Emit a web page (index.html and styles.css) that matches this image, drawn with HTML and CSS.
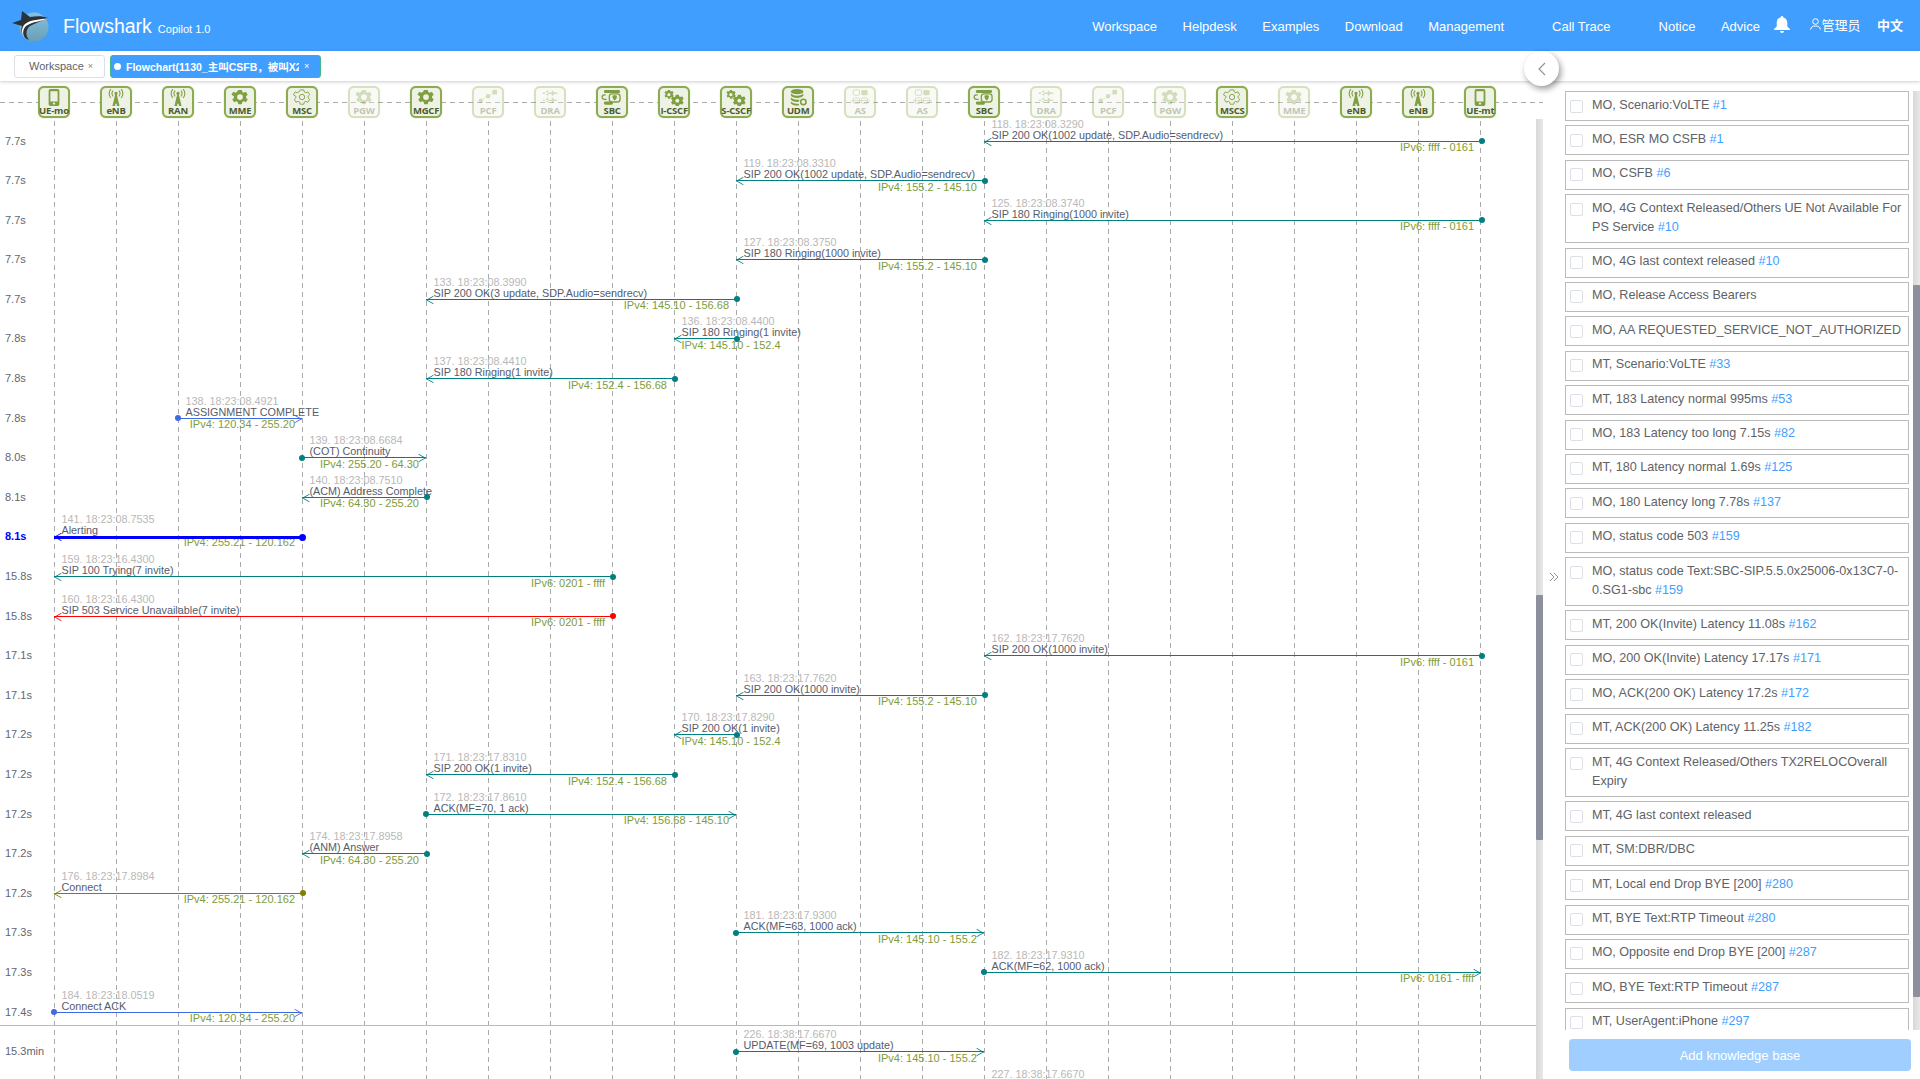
FILE: index.html
```html
<!DOCTYPE html>
<html lang="en">
<head>
<meta charset="utf-8">
<title>Flowshark</title>
<link rel="stylesheet" href="styles.css">
</head>
<body>
<svg class="defs" width="0" height="0" aria-hidden="true">
  <defs>
    <linearGradient id="globe" x1="0" y1="0" x2="0" y2="1"><stop offset="0" stop-color="#86bfe0"/><stop offset="1" stop-color="#6a9fb5"/></linearGradient>
    <symbol id="i-phone" viewBox="0 0 28 19"><path fill-rule="evenodd" d="M10 0h8a2 2 0 0 1 2 2v15a2 2 0 0 1-2 2h-8a2 2 0 0 1-2-2V2a2 2 0 0 1 2-2zm0 2.5V14h8V2.500zM14 15a1.300 1.300 0 1 0 0 2.600A1.300 1.300 0 0 0 14 15z"/></symbol>
    <symbol id="i-ant" viewBox="0 0 28 19"><circle cx="14" cy="5" r="1.800"/><path d="M13.200 6h1.600L18 19h-3l-.3-2.500h-1.400L13 19h-3z"/><path fill="none" stroke="currentColor" stroke-width="1.200" d="M10.800 1.800a5 5 0 0 0 0 6.400M17.200 1.800a5 5 0 0 1 0 6.400M8.300 0a8 8 0 0 0 0 10M19.700 0a8 8 0 0 1 0 10"/></symbol>
    <symbol id="i-gear" viewBox="0 0 28 19"><path fill-rule="evenodd" d="M12 1h4l.6 2.400 1.700.8 2.300-1 2 3.200-1.800 1.700v1.800l1.800 1.700-2 3.200-2.300-1-1.700.8L16 17h-4l-.6-2.400-1.700-.8-2.300 1-2-3.200 1.800-1.700V8.100L4.400 6.400l2-3.200 2.300 1 1.700-.8zM14 5.800a3.200 3.200 0 1 0 0 6.400 3.200 3.200 0 0 0 0-6.400z"/></symbol>
    <symbol id="i-gearo" viewBox="0 0 28 19"><path fill="none" stroke="currentColor" stroke-width="1" d="M12 1h4l.6 2.400 1.700.8 2.300-1 2 3.200-1.800 1.700v1.800l1.800 1.700-2 3.200-2.300-1-1.700.8L16 17h-4l-.6-2.400-1.700-.8-2.300 1-2-3.200 1.800-1.700V8.100L4.400 6.400l2-3.200 2.300 1 1.700-.8z"/><circle cx="14" cy="9" r="3" fill="none" stroke="currentColor"/></symbol>
    <symbol id="i-net" viewBox="0 0 28 19"><rect x="19" y="1" width="5" height="5"/><circle cx="14" cy="8" r="2.500"/><circle cx="6" cy="13" r="2.500"/><path fill="none" stroke="currentColor" stroke-dasharray="2 1.500" d="M6 13l8-5 7-4"/></symbol>
    <symbol id="i-dra" viewBox="0 0 28 19"><path d="M6 4h16v1.500H6zM6 12h16v1.500H6zM12 1l-4 3.700 4 3.300zM16 1l4 3.700-4 3.300zM12 9l-4 3.700 4 3.300zM16 9l4 3.700-4 3.300z"/></symbol>
    <symbol id="i-sbc" viewBox="0 0 28 19"><rect x="5" y="1" width="18" height="3.500" rx="1.500"/><rect x="5" y="14" width="10" height="3.500" rx="1.500"/><path fill="none" stroke="currentColor" stroke-width="1.400" d="M7 6.500H5.500a1.500 1.500 0 0 0 0 5H8"/><rect x="11" y="5.500" width="12" height="9" rx="3" fill="none" stroke="currentColor" stroke-width="1.500"/><path d="M14.500 7.500l2.500-.8 2.500.8c0 3-1 4.500-2.500 5.300-1.500-.8-2.500-2.300-2.500-5.300z"/></symbol>
    <symbol id="i-gears" viewBox="0 0 28 19"><g><path fill-rule="evenodd" d="M7 1h2.400l.4 1.300 1.200.6 1.300-.6 1.300 1.900-1 1 .1 1.400 1.100.8-1.200 2-1.400-.5-1.100.7-.3 1.400H7.500l-.4-1.400-1.100-.6-1.400.5-1.200-2 1.100-.9V5.200L3.400 4.300l1.200-2 1.300.6 1.100-.6zM8.300 4.500a1.800 1.800 0 1 0 0 3.600 1.800 1.800 0 0 0 0-3.600z"/><path fill-rule="evenodd" d="M16 6.500h3.400l.5 1.800 1.500.7 1.700-.8 1.700 2.700-1.400 1.300v1.400l1.400 1.300-1.700 2.700-1.700-.8-1.500.7-.5 1.800H16l-.5-1.800-1.500-.7-1.700.8-1.700-2.700 1.400-1.300v-1.400L10.600 11l1.700-2.700 1.700.8 1.500-.7zm1.700 4.300a2.200 2.200 0 1 0 0 4.400 2.200 2.200 0 0 0 0-4.400z"/></g></symbol>
    <symbol id="i-db" viewBox="0 0 28 19"><ellipse cx="13" cy="3" rx="7" ry="3"/><path d="M6 4.800c1 1.800 3.500 2.700 7 2.700s6-.9 7-2.700v2.500c-1 1.800-3.500 2.700-7 2.700S7 9.100 6 7.300zM6 9.300c1 1.800 3.500 2.700 7 2.700 1 0 2 0 3-.3-.8.800-1.300 1.700-1.400 2.800L13 14.500c-3.500 0-6-.9-7-2.700zM6 13.800c1 1.700 3.500 2.700 7 2.700l1.700-.1.700 2c-.8.100-1.600.1-2.400.1-3.500 0-6-1-7-2.700z"/><circle cx="20" cy="14.500" r="3" fill="none" stroke="currentColor" stroke-width="1.800"/></symbol>
    <symbol id="i-as" viewBox="0 0 28 19"><rect x="6.500" y="1" width="7" height="6" rx="1.200" fill="none" stroke="currentColor"/><rect x="15.500" y="1" width="7" height="6" rx="1.200"/><rect x="6.500" y="10" width="7" height="6" rx="1.200" fill="none" stroke="currentColor"/><rect x="15.500" y="10" width="7" height="6" rx="1.200" fill="none" stroke="currentColor"/><path fill="none" stroke="currentColor" d="M4 13h21"/></symbol>
  </defs>
</svg>

<header class="topbar">
  <svg class="logo" viewBox="0 0 40 34" aria-hidden="true">
    <circle cx="22" cy="19" r="14.500" fill="url(#globe)"/>
    <path fill="#2b3238" d="M0 15l9-3 1-9 8 6c7-1 13-1 18 1-6 3-13 5-18 8-4 3-5 9-1 14-6-2-9-9-7-14z"/>
    <path fill="#fff" d="M36 10c-7 4-15 3-22 8-3 3-4 8-1 12-4-4-4-10 0-14 6-5 15-4 23-6z"/>
  </svg>
  <span class="brand">Flowshark</span>
  <span class="brand-sub">Copilot 1.0</span>
  <nav class="nav">
    <a>Workspace</a><a>Helpdesk</a><a>Examples</a><a>Download</a><a class="wide">Management</a><a class="wide">Call Trace</a><a>Notice</a><a>Advice</a>
    <svg class="bell" viewBox="0 0 16 17" aria-hidden="true"><path fill="#fff" d="M8 0a1.300 1.300 0 0 1 1.300 1.400C12 2 13.300 4.300 13.300 7v3.500L16 13v1H0v-1l2.700-2.500V7c0-2.700 1.300-5 4-5.600A1.300 1.300 0 0 1 8 0zM6 15h4a2 2 0 0 1-4 0z"/></svg>
    <span class="user"><svg viewBox="0 0 11 12" aria-hidden="true"><circle cx="5.500" cy="3.500" r="2.800" fill="none" stroke="#fff"/><path d="M.7 11.500c0-2.500 2-3.500 4.800-3.500s4.800 1 4.800 3.500" fill="none" stroke="#fff"/></svg>管理员</span>
    <span class="lang">中文</span>
  </nav>
</header>

<div class="tabbar">
  <div class="tab"><span>Workspace</span><b class="x">×</b></div>
  <div class="tab active"><i class="dot"></i><span class="tab-title">Flowchart(1130_主叫CSFB，被叫X2</span><b class="x">×</b></div>
  <button class="collapse" aria-label="collapse"><svg viewBox="0 0 8 14" aria-hidden="true"><path d="M7 1L1 7l6 6" fill="none" stroke="#8a8f99" stroke-width="1.100"/></svg></button>
</div>

<main class="main">
  <section class="chart">
    <div class="nodes">
      <div class="cell"><div class="node"><svg><use href="#i-phone"/></svg><span>UE-mo</span></div></div>
      <div class="cell"><div class="node"><svg><use href="#i-ant"/></svg><span>eNB</span></div></div>
      <div class="cell"><div class="node"><svg><use href="#i-ant"/></svg><span>RAN</span></div></div>
      <div class="cell"><div class="node"><svg><use href="#i-gear"/></svg><span>MME</span></div></div>
      <div class="cell"><div class="node"><svg><use href="#i-gearo"/></svg><span>MSC</span></div></div>
      <div class="cell"><div class="node off"><svg><use href="#i-gear"/></svg><span>PGW</span></div></div>
      <div class="cell"><div class="node"><svg><use href="#i-gear"/></svg><span>MGCF</span></div></div>
      <div class="cell"><div class="node off"><svg><use href="#i-net"/></svg><span>PCF</span></div></div>
      <div class="cell"><div class="node off"><svg><use href="#i-dra"/></svg><span>DRA</span></div></div>
      <div class="cell"><div class="node"><svg><use href="#i-sbc"/></svg><span>SBC</span></div></div>
      <div class="cell"><div class="node"><svg><use href="#i-gears"/></svg><span>I-CSCF</span></div></div>
      <div class="cell"><div class="node"><svg><use href="#i-gears"/></svg><span>S-CSCF</span></div></div>
      <div class="cell"><div class="node"><svg><use href="#i-db"/></svg><span>UDM</span></div></div>
      <div class="cell"><div class="node off"><svg><use href="#i-as"/></svg><span>AS</span></div></div>
      <div class="cell"><div class="node off"><svg><use href="#i-as"/></svg><span>AS</span></div></div>
      <div class="cell"><div class="node"><svg><use href="#i-sbc"/></svg><span>SBC</span></div></div>
      <div class="cell"><div class="node off"><svg><use href="#i-dra"/></svg><span>DRA</span></div></div>
      <div class="cell"><div class="node off"><svg><use href="#i-net"/></svg><span>PCF</span></div></div>
      <div class="cell"><div class="node off"><svg><use href="#i-gear"/></svg><span>PGW</span></div></div>
      <div class="cell"><div class="node"><svg><use href="#i-gearo"/></svg><span>MSCS</span></div></div>
      <div class="cell"><div class="node off"><svg><use href="#i-gear"/></svg><span>MME</span></div></div>
      <div class="cell"><div class="node"><svg><use href="#i-ant"/></svg><span>eNB</span></div></div>
      <div class="cell"><div class="node"><svg><use href="#i-ant"/></svg><span>eNB</span></div></div>
      <div class="cell"><div class="node"><svg><use href="#i-phone"/></svg><span>UE-mt</span></div></div>
    </div>
    <div class="chart-body">
      <div class="flow">
        <div class="lanes"><i></i><i></i><i></i><i></i><i></i><i></i><i></i><i></i><i></i><i></i><i></i><i></i><i></i><i></i><i></i><i></i><i></i><i></i><i></i><i></i><i></i><i></i><i></i><i></i></div>

        <div class="row"><span class="time">7.7s</span><div class="msg teal" style="margin-left:984px;width:497px"><span class="seq">118. 18:23:08.3290</span><span class="name">SIP 200 OK(1002 update, SDP.Audio=sendrecv)</span><i class="line"></i><span class="addr">IPv6: ffff - 0161</span></div></div>
        <div class="row"><span class="time">7.7s</span><div class="msg teal" style="margin-left:736px;width:248px"><span class="seq">119. 18:23:08.3310</span><span class="name">SIP 200 OK(1002 update, SDP.Audio=sendrecv)</span><i class="line"></i><span class="addr">IPv4: 155.2 - 145.10</span></div></div>
        <div class="row"><span class="time">7.7s</span><div class="msg teal" style="margin-left:984px;width:497px"><span class="seq">125. 18:23:08.3740</span><span class="name">SIP 180 Ringing(1000 invite)</span><i class="line"></i><span class="addr">IPv6: ffff - 0161</span></div></div>
        <div class="row"><span class="time">7.7s</span><div class="msg teal" style="margin-left:736px;width:248px"><span class="seq">127. 18:23:08.3750</span><span class="name">SIP 180 Ringing(1000 invite)</span><i class="line"></i><span class="addr">IPv4: 155.2 - 145.10</span></div></div>
        <div class="row"><span class="time">7.7s</span><div class="msg teal" style="margin-left:426px;width:310px"><span class="seq">133. 18:23:08.3990</span><span class="name">SIP 200 OK(3 update, SDP.Audio=sendrecv)</span><i class="line"></i><span class="addr">IPv4: 145.10 - 156.68</span></div></div>
        <div class="row"><span class="time">7.8s</span><div class="msg teal" style="margin-left:674px;width:62px"><span class="seq">136. 18:23:08.4400</span><span class="name">SIP 180 Ringing(1 invite)</span><i class="line"></i><span class="addr">IPv4: 145.10 - 152.4</span></div></div>
        <div class="row"><span class="time">7.8s</span><div class="msg teal" style="margin-left:426px;width:248px"><span class="seq">137. 18:23:08.4410</span><span class="name">SIP 180 Ringing(1 invite)</span><i class="line"></i><span class="addr">IPv4: 152.4 - 156.68</span></div></div>
        <div class="row"><span class="time">7.8s</span><div class="msg blue fwd" style="margin-left:178px;width:124px"><span class="seq">138. 18:23:08.4921</span><span class="name">ASSIGNMENT COMPLETE</span><i class="line"></i><span class="addr">IPv4: 120.34 - 255.20</span></div></div>
        <div class="row"><span class="time">8.0s</span><div class="msg teal fwd" style="margin-left:302px;width:124px"><span class="seq">139. 18:23:08.6684</span><span class="name">(COT) Continuity</span><i class="line"></i><span class="addr">IPv4: 255.20 - 64.30</span></div></div>
        <div class="row"><span class="time">8.1s</span><div class="msg teal" style="margin-left:302px;width:124px"><span class="seq">140. 18:23:08.7510</span><span class="name">(ACM) Address Complete</span><i class="line"></i><span class="addr">IPv4: 64.30 - 255.20</span></div></div>
        <div class="row"><span class="time now">8.1s</span><div class="msg strong" style="margin-left:54px;width:248px"><span class="seq">141. 18:23:08.7535</span><span class="name">Alerting</span><i class="line"></i><span class="addr">IPv4: 255.21 - 120.162</span></div></div>
        <div class="row"><span class="time">15.8s</span><div class="msg teal" style="margin-left:54px;width:558px"><span class="seq">159. 18:23:16.4300</span><span class="name">SIP 100 Trying(7 invite)</span><i class="line"></i><span class="addr">IPv6: 0201 - ffff</span></div></div>
        <div class="row"><span class="time">15.8s</span><div class="msg red" style="margin-left:54px;width:558px"><span class="seq">160. 18:23:16.4300</span><span class="name">SIP 503 Service Unavailable(7 invite)</span><i class="line"></i><span class="addr">IPv6: 0201 - ffff</span></div></div>
        <div class="row"><span class="time">17.1s</span><div class="msg teal" style="margin-left:984px;width:497px"><span class="seq">162. 18:23:17.7620</span><span class="name">SIP 200 OK(1000 invite)</span><i class="line"></i><span class="addr">IPv6: ffff - 0161</span></div></div>
        <div class="row"><span class="time">17.1s</span><div class="msg teal" style="margin-left:736px;width:248px"><span class="seq">163. 18:23:17.7620</span><span class="name">SIP 200 OK(1000 invite)</span><i class="line"></i><span class="addr">IPv4: 155.2 - 145.10</span></div></div>
        <div class="row"><span class="time">17.2s</span><div class="msg teal" style="margin-left:674px;width:62px"><span class="seq">170. 18:23:17.8290</span><span class="name">SIP 200 OK(1 invite)</span><i class="line"></i><span class="addr">IPv4: 145.10 - 152.4</span></div></div>
        <div class="row"><span class="time">17.2s</span><div class="msg teal" style="margin-left:426px;width:248px"><span class="seq">171. 18:23:17.8310</span><span class="name">SIP 200 OK(1 invite)</span><i class="line"></i><span class="addr">IPv4: 152.4 - 156.68</span></div></div>
        <div class="row"><span class="time">17.2s</span><div class="msg teal fwd" style="margin-left:426px;width:310px"><span class="seq">172. 18:23:17.8610</span><span class="name">ACK(MF=70, 1 ack)</span><i class="line"></i><span class="addr">IPv4: 156.68 - 145.10</span></div></div>
        <div class="row"><span class="time">17.2s</span><div class="msg teal" style="margin-left:302px;width:124px"><span class="seq">174. 18:23:17.8958</span><span class="name">(ANM) Answer</span><i class="line"></i><span class="addr">IPv4: 64.30 - 255.20</span></div></div>
        <div class="row"><span class="time">17.2s</span><div class="msg olive" style="margin-left:54px;width:248px"><span class="seq">176. 18:23:17.8984</span><span class="name">Connect</span><i class="line"></i><span class="addr">IPv4: 255.21 - 120.162</span></div></div>
        <div class="row"><span class="time">17.3s</span><div class="msg teal fwd" style="margin-left:736px;width:248px"><span class="seq">181. 18:23:17.9300</span><span class="name">ACK(MF=63, 1000 ack)</span><i class="line"></i><span class="addr">IPv4: 145.10 - 155.2</span></div></div>
        <div class="row"><span class="time">17.3s</span><div class="msg teal fwd" style="margin-left:984px;width:497px"><span class="seq">182. 18:23:17.9310</span><span class="name">ACK(MF=62, 1000 ack)</span><i class="line"></i><span class="addr">IPv6: 0161 - ffff</span></div></div>
        <div class="row gap-mark"><span class="time">17.4s</span><div class="msg blue fwd" style="margin-left:54px;width:248px"><span class="seq">184. 18:23:18.0519</span><span class="name">Connect ACK</span><i class="line"></i><span class="addr">IPv4: 120.34 - 255.20</span></div></div>
        <div class="row"><span class="time">15.3min</span><div class="msg teal fwd" style="margin-left:736px;width:248px"><span class="seq">226. 18:38:17.6670</span><span class="name">UPDATE(MF=69, 1003 update)</span><i class="line"></i><span class="addr">IPv4: 145.10 - 155.2</span></div></div>
        <div class="row"><span class="time"></span><div class="msg teal" style="margin-left:984px;width:497px"><span class="seq">227. 18:38:17.6670</span></div></div>
      </div>
      <div class="vbar"><i class="vbar-thumb chart-thumb"></i></div>
    </div>
  </section>

  <aside class="side">
    <div class="gutter"><svg viewBox="0 0 10 10" aria-hidden="true"><path d="M1 1l4 4-4 4M5 1l4 4-4 4" fill="none" stroke="#909399"/></svg></div>
    <div class="side-main">
      <div class="list-wrap">
        <ul class="list">
          <li><i class="box"></i><p>MO, Scenario:VoLTE <a>#1</a></p></li>
          <li><i class="box"></i><p>MO, ESR MO CSFB <a>#1</a></p></li>
          <li><i class="box"></i><p>MO, CSFB <a>#6</a></p></li>
          <li><i class="box"></i><p>MO, 4G Context Released/Others UE Not Available For PS Service <a>#10</a></p></li>
          <li><i class="box"></i><p>MO, 4G last context released <a>#10</a></p></li>
          <li><i class="box"></i><p>MO, Release Access Bearers</p></li>
          <li><i class="box"></i><p>MO, AA REQUESTED_SERVICE_NOT_AUTHORIZED</p></li>
          <li><i class="box"></i><p>MT, Scenario:VoLTE <a>#33</a></p></li>
          <li><i class="box"></i><p>MT, 183 Latency normal 995ms <a>#53</a></p></li>
          <li><i class="box"></i><p>MO, 183 Latency too long 7.15s <a>#82</a></p></li>
          <li><i class="box"></i><p>MT, 180 Latency normal 1.69s <a>#125</a></p></li>
          <li><i class="box"></i><p>MO, 180 Latency long 7.78s <a>#137</a></p></li>
          <li><i class="box"></i><p>MO, status code 503 <a>#159</a></p></li>
          <li><i class="box"></i><p>MO, status code Text:SBC-SIP.5.5.0x25006-0x13C7-0-0.SG1-sbc <a>#159</a></p></li>
          <li><i class="box"></i><p>MT, 200 OK(Invite) Latency 11.08s <a>#162</a></p></li>
          <li><i class="box"></i><p>MO, 200 OK(Invite) Latency 17.17s <a>#171</a></p></li>
          <li><i class="box"></i><p>MO, ACK(200 OK) Latency 17.2s <a>#172</a></p></li>
          <li><i class="box"></i><p>MT, ACK(200 OK) Latency 11.25s <a>#182</a></p></li>
          <li><i class="box"></i><p>MT, 4G Context Released/Others TX2RELOCOverall Expiry</p></li>
          <li><i class="box"></i><p>MT, 4G last context released</p></li>
          <li><i class="box"></i><p>MT, SM:DBR/DBC</p></li>
          <li><i class="box"></i><p>MT, Local end Drop BYE [200] <a>#280</a></p></li>
          <li><i class="box"></i><p>MT, BYE Text:RTP Timeout <a>#280</a></p></li>
          <li><i class="box"></i><p>MO, Opposite end Drop BYE [200] <a>#287</a></p></li>
          <li><i class="box"></i><p>MO, BYE Text:RTP Timeout <a>#287</a></p></li>
          <li><i class="box"></i><p>MT, UserAgent:iPhone <a>#297</a></p></li>
        </ul>
        <div class="vbar side-bar"><i class="vbar-thumb side-thumb"></i></div>
      </div>
      <button class="add">Add knowledge base</button>
    </div>
  </aside>
</main>
</body>
</html>
```

FILE: styles.css
```css
* { box-sizing: border-box; }
html, body { margin: 0; height: 100%; }
body {
  height: 1079px;
  overflow: hidden;
  display: flex;
  flex-direction: column;
  background: #fff;
  color: #606266;
  font-family: "Liberation Sans", "Noto Sans CJK SC", sans-serif;
}
.defs { position: absolute; }

/* top bar */
.topbar {
  flex: 0 0 51px;
  display: flex;
  align-items: center;
  background: #409eff;
  color: #fff;
  padding-left: 12px;
}
.logo { width: 40px; height: 34px; margin-top: -1px; }
.brand { font-size: 19.500px; margin: 1px 0 0 11px; }
.brand-sub { font-size: 11px; margin: 6px 0 0 6px; }
.nav { margin-left: auto; display: flex; align-items: center; font-size: 13px; padding: 1px 17px 0 0; }
.nav a { margin-right: 25.500px; }
.nav a.wide { margin-right: 48px; }
.bell { width: 16px; height: 17px; margin: -3px 20px 0 -11px; }
.user { display: flex; align-items: center; margin-top: -4px; }
.user svg { width: 11px; height: 12px; }
.lang { font-weight: 700; margin: -4px 0 0 16.500px; }

/* tab bar */
.tabbar {
  flex: 0 0 30px;
  position: relative;
  z-index: 3;
  display: flex;
  align-items: center;
  gap: 5px;
  padding: 0 0 0 14px;
  background: #fff;
  box-shadow: 0 1px 3px rgba(60, 60, 80, .25);
  font-size: 11px;
}
.tab {
  height: 23px;
  width: 91px;
  display: flex;
  align-items: center;
  padding-left: 14px;
  border: 1px solid #dcdfe6;
  border-radius: 3px;
  color: #606266;
}
.tab.active {
  width: 211px;
  padding-left: 3px;
  background: #409eff;
  border-color: #42b983;
  color: #fff;
  font-weight: 700;
  font-size: 10.500px;
}
.dot { width: 7px; height: 7px; border-radius: 50%; background: #fff; margin-right: 5px; flex: none; }
.tab-title { width: 173px; overflow: hidden; white-space: nowrap; flex: none; }
.x { font-size: 9px; font-weight: 400; margin-left: 4px; opacity: .75; }
.active .x { margin-left: 5px; opacity: 1; }
.collapse {
  position: absolute;
  left: 1524px;
  top: 0;
  width: 35px;
  height: 35px;
  padding: 0;
  border: 0;
  border-radius: 50%;
  background: #fff;
  box-shadow: 2px 3px 6px rgba(0, 0, 0, .4);
  display: flex;
  align-items: center;
  justify-content: center;
}
.collapse svg { width: 8px; height: 14px; }

/* layout */
.main { flex: 1; display: flex; min-height: 0; }
.chart { flex: 0 0 1543px; display: flex; flex-direction: column; min-height: 0; }

/* node header */
.nodes {
  flex: 0 0 36px;
  display: flex;
  padding: 4.500px 0 0 23px;
  background: linear-gradient(to right, #aaa 5px, transparent 5px) 0 21px / 9px 1px repeat-x;
}
.cell { flex: 0 0 62.030px; display: flex; justify-content: center; }
.node {
  width: 32px;
  height: 32px;
  flex: none;
  display: flex;
  flex-direction: column;
  align-items: center;
  border: 2px solid #8dac52;
  border-radius: 6px;
  background: #eef2e4;
  color: #7f9f42;
  box-shadow: 0 0 1px #8dac52;
}
.node svg { width: 28px; height: 17px; flex: none; margin-top: 1px; fill: currentColor; }
.node span {
  font-family: "Open Sans", sans-serif;
  font-size: 9.500px;
  line-height: 10px;
  font-weight: 700;
  letter-spacing: -.2px;
  color: #4c5c2c;
  white-space: nowrap;
}
.node.off { opacity: .35; }

/* sequence body */
.chart-body { flex: 1; display: flex; min-height: 0; }
.flow { flex: 1; position: relative; overflow: hidden; min-width: 0; }
.lanes { position: absolute; inset: 3px 0 0 54px; display: flex; }
.lanes i {
  flex: 0 0 62.030px;
  background: linear-gradient(#aaa 5px, transparent 5px) 0 0 / 1px 9px repeat-y;
}
.row { height: 39.600px; display: flex; position: relative; }
.time {
  flex: 0 0 0;
  width: 0;
  margin-top: 16px;
  text-indent: 5px;
  font-size: 11px;
  line-height: 14px;
  white-space: nowrap;
  color: #5f6672;
}
.time.now { color: #0000ff; font-weight: 700; }
.gap-mark::after {
  content: "";
  position: absolute;
  left: 0;
  right: 0;
  top: 36px;
  height: 1px;
  background: #93d29e;
}
.msg {
  --c: #008080;
  flex: none;
  display: flex;
  flex-direction: column;
  padding-top: 1px;
  white-space: nowrap;
  font-size: 10.800px;
  line-height: 11px;
  position: relative;
  z-index: 1;
}
.blue { --c: #4169e1; }
.red { --c: #ff0000; }
.olive { --c: #808000; }
.strong { --c: #0000ff; }
.seq, .name, .addr { padding-left: 7.500px; height: 11px; }
.seq { color: #b8b8b8; }
.name { color: #565c6b; }
.addr { color: #7e9c3a; text-align: right; padding-right: 7px; font-size: 11px; }
.line { display: block; height: 1px; margin-bottom: .500px; background: var(--c); box-shadow: 0 0 .500px var(--c); position: relative; }
.strong .line { height: 3px; margin-bottom: -1.500px; margin-top: -.500px; }
.line::before {
  content: "";
  position: absolute;
  right: -3.500px;
  top: -2.500px;
  width: 6px;
  height: 6px;
  border-radius: 50%;
  background: var(--c);
}
.strong .line::before { top: -2px; right: -3.500px; width: 7px; height: 7px; }
.line::after {
  content: "";
  position: absolute;
  left: 2px;
  top: -4px;
  width: 9px;
  height: 9px;
  border-left: 1.500px solid var(--c);
  border-top: 1.500px solid var(--c);
  transform: scaleY(.55) rotate(-45deg);
  transform-origin: 50% 50%;
}
.fwd .line::before { right: auto; left: -3px; }
.fwd .line::after { left: auto; right: 2px; transform: scaleY(.55) rotate(135deg); }

/* scrollbars */
.vbar { flex: 0 0 7px; margin-top: 1px; background: linear-gradient(to right, #d8d8d8, #e8e8e8); }
.vbar-thumb { display: block; background: #8b909c; border-radius: 1px; }
.chart-thumb { margin-top: 476px; height: 245px; }
.side-bar { margin: 0 0 0 4px; }
.side-thumb { margin-top: 194px; height: 712px; }

/* right panel */
.side { flex: 1; display: flex; min-width: 0; }
.gutter { flex: 0 0 22px; display: flex; align-items: center; justify-content: center; padding-bottom: 6px; }
.gutter svg { width: 10px; height: 10px; }
.side-main { flex: 1; display: flex; flex-direction: column; min-width: 0; }
.list-wrap { flex: 0 0 949px; display: flex; padding-top: 10px; overflow: hidden; min-height: 0; }
.list { flex: 0 0 344px; margin: 0; padding: 0; list-style: none; }
.list li {
  display: flex;
  align-items: flex-start;
  gap: 9px;
  margin-bottom: 4.400px;
  padding: 3.500px 4px 5.500px 4px;
  border: 1px solid #bbb;
  font-size: 12.600px;
  line-height: 19px;
  color: #606266;
}
.list p { margin: 0; flex: 1; min-width: 0; }
.list a { color: #409eff; }
.box { flex: 0 0 13px; height: 13px; margin-top: 4px; border: 1px solid #dcdfe6; border-radius: 2px; background: #fff; }
.add {
  height: 32px;
  width: 342px;
  margin: 9px 0 0 4px;
  border: 0;
  border-radius: 4px;
  background: #a0cfff;
  color: #fff;
  font: 13px "Liberation Sans", sans-serif;
}
```
